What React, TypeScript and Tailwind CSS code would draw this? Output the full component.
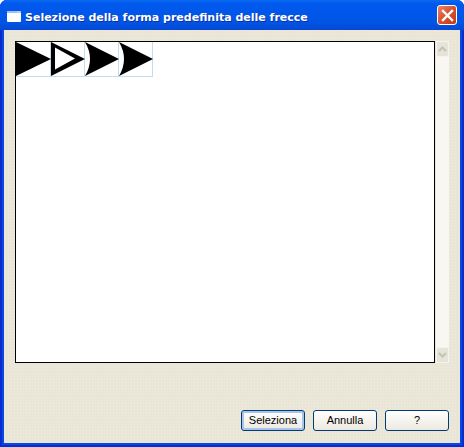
const arrows = [
  { w: "w-[35px]", d: "M0 0 L35 17 L0 34 Z" },
  { w: "w-[34px]", d: "M0 0 L34 17 L0 34 Z", inner: "M4 5.5 L24 16.5 L4 27.5 Z" },
  { w: "w-[34px]", d: "M0 0 L34 17 L0 34 Q10 17 0 0 Z" },
  { w: "w-[34px]", d: "M0 0 L34 17 L0 34 Q10 17 0 0 Z" },
];

const XpButton = ({ label, active }: { label: string; active?: boolean }) => (
  <button
    className={`w-[64px] h-[21px] rounded-[3px] border border-[#003c74] bg-gradient-to-b from-white to-[#ece9df] text-[11px] text-black leading-none ${
      active ? "shadow-[inset_0_0_0_2px_#a9c4ec]" : ""
    }`}
  >
    {label}
  </button>
);

const App = () => {
  return (
    <div className="w-[464px] h-[447px] flex flex-col overflow-hidden rounded-t-[7px] bg-[#0648e0] shadow-[inset_2px_0_0_#0a2ccf,inset_-2px_0_0_#0a2ccf,inset_0_-2px_0_#0a2ccf] font-['Liberation_Sans',sans-serif]">
      {/* title bar */}
      <div className="h-[30px] flex items-center pl-[7px] pr-[7px] bg-[linear-gradient(to_bottom,#0a6af0_0px,#0058ee_4px,#0055e5_22px,#0648d4_30px)]">
        <svg width="14" height="11" viewBox="0 0 14 11" className="mr-[4px] mt-[3px]">
          <rect x="0" y="0" width="14" height="11" rx="1" fill="#fff" />
          <rect x="0" y="0" width="14" height="2" fill="#9fc0f0" />
          <rect x="10" y="0.5" width="3" height="1" fill="#e9d6b8" />
        </svg>
        <span className="mt-[6px] text-[11px] font-bold text-white font-['DejaVu_Sans',sans-serif] [text-shadow:1px_1px_0_#0f2f9e]">
          Selezione della forma predefinita delle frecce
        </span>
        <div className="ml-auto w-[20px] h-[20px] rounded-[3px] border border-white bg-gradient-to-br from-[#e9836a] via-[#d9512c] to-[#c2391a] flex items-center justify-center">
          <svg width="13" height="13" viewBox="0 0 13 13">
            <path d="M2 2 L11 11 M11 2 L2 11" stroke="#fff" strokeWidth="2.4" strokeLinecap="square" />
          </svg>
        </div>
      </div>

      {/* client area */}
      <div className="flex-1 mx-[4px] mb-[4px] bg-[#e9e6d7] bg-[radial-gradient(#efeddf_0.6px,transparent_0.7px)] bg-[length:3px_3px] pt-[11px] px-[11px] flex flex-col">
        <div className="flex gap-[1px] h-[322px]">
          <div className="w-[420px] border border-black bg-white">
            <div className="flex">
              {arrows.map((a, i) => (
                <div key={i} className={`${a.w} h-[35px] border-r border-b border-[#c3dcef] shrink-0`}>
                  <svg width="35" height="34" viewBox="0 0 35 34" className="overflow-visible">
                    <path d={a.d} fill="#000" />
                    {a.inner && <path d={a.inner} fill="#fff" />}
                  </svg>
                </div>
              ))}
            </div>
          </div>
          <div className="w-[13px] flex flex-col justify-between bg-[#f8f7f2]">
            <div className="h-[16px] rounded-[2px] border border-[#f4f3ee] bg-[#e6e4d8] flex items-center justify-center">
              <svg width="9" height="6" viewBox="0 0 9 6">
                <path d="M1 5 L4.5 1.5 L8 5" fill="none" stroke="#c4c2b5" strokeWidth="2" />
              </svg>
            </div>
            <div className="h-[16px] rounded-[2px] border border-[#f4f3ee] bg-[#e6e4d8] flex items-center justify-center">
              <svg width="9" height="6" viewBox="0 0 9 6">
                <path d="M1 1 L4.5 4.5 L8 1" fill="none" stroke="#c4c2b5" strokeWidth="2" />
              </svg>
            </div>
          </div>
        </div>
        <div className="mt-[47px] flex justify-end gap-[8px]">
          <XpButton label="Seleziona" active />
          <XpButton label="Annulla" />
          <XpButton label="?" />
        </div>
      </div>
    </div>
  );
};

export default App;
